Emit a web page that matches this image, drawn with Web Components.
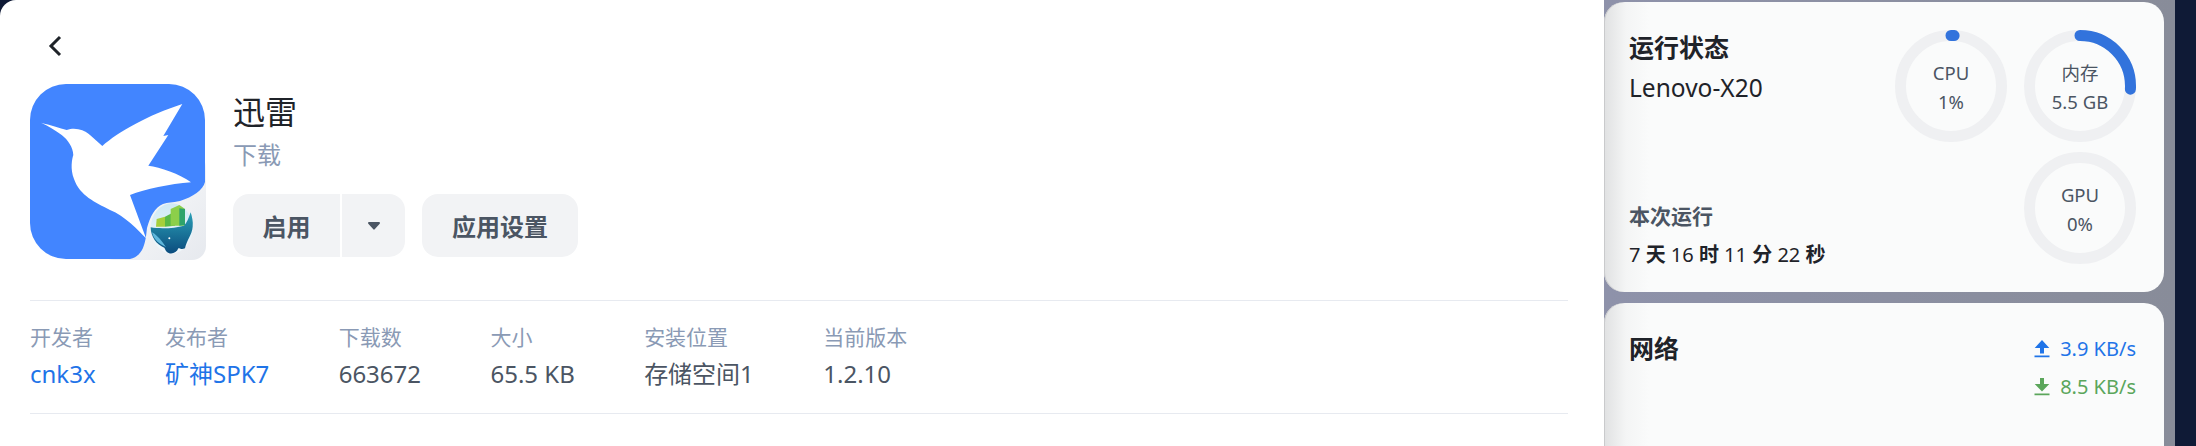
<!DOCTYPE html>
<html lang="zh-CN">
<head>
<meta charset="utf-8">
<title>迅雷</title>
<style>
  html, body { margin: 0; height: 446px; overflow: hidden; background: #0f1a36; }
  body { font-family: "Noto Sans", "Noto Sans CJK SC", sans-serif; }
  app-shell { height: 446px; }
</style>
</head>
<body>
<app-shell>
  <app-detail slot="main"></app-detail>
  <status-card slot="side"></status-card>
  <network-card slot="side"></network-card>
</app-shell>

<script>
class AppShell extends HTMLElement {
  constructor() {
    super();
    this.attachShadow({ mode: 'open' });
  }

  connectedCallback() {
    this.shadowRoot.innerHTML = `
    <style>
      :host { display: flex; width: 2196px; }
      .main { width: 1604px; flex: none; background: #fff; border-top-left-radius: 16px; overflow: hidden; }
      .rail {
        width: 571px; flex: none; box-sizing: border-box; height: 446px; overflow: hidden;
        padding: 2px 11px 0 0; display: flex; flex-direction: column; gap: 11px;
        background: linear-gradient(90deg, #8e92aa, #888c99);
      }
    </style>
    <div class="main"><slot name="main"></slot></div>
    <div class="rail"><slot name="side"></slot></div>
    `;
  }
}

class AppIcon extends HTMLElement {
  constructor() {
    super();
    this.attachShadow({ mode: 'open' });
  }

  connectedCallback() {
    this.shadowRoot.innerHTML = `
    <style>
      :host { display: block; width: 176px; height: 176px; flex: none; }
      svg { display: block; }
    </style>
    <svg width="176" height="176" viewBox="0 0 176 176">
      <defs>
        <linearGradient id="c" x1="0" y1="0" x2="1" y2="1"><stop offset="0" stop-color="#fff"/><stop offset="1" stop-color="#e6e9ee"/></linearGradient>
        <linearGradient id="w" x1="0" y1="0" x2="0" y2="1"><stop offset="0" stop-color="#2a9fb6"/><stop offset="1" stop-color="#0b4c7e"/></linearGradient>
        <linearGradient id="b" x1="0" y1="0" x2="0" y2="1"><stop offset="0" stop-color="#cfe9f5"/><stop offset="1" stop-color="#f2f8fb"/></linearGradient>
      </defs>
      <rect x="70" y="70" width="106" height="106" rx="14" fill="url(#c)"/>
      <path d="M36 0H139A36 36 0 0 1 175 36V98C173 106 163 113 150 117C142 119 138 118 133 120C125 123 120 133 117 144C116 152 116 156 113 164C110 170 106 174 100 175H36A36 36 0 0 1 0 139V36A36 36 0 0 1 36 0Z" fill="#4285ff"/>
      <path d="M11 38.7C20 41 30 44 36.7 46C41 44.5 45 44.5 48.3 45.3C54 46.5 58 49 60 51L72.3 62C88 48 118 31 152.3 20L133.3 52L138.3 51L118.3 81.7C130 83 150 90 161 98.3C140 100 115 105 100 111L116 154.3C108 146 95 132 80 126C65 118 50 112 44 95C40 85 42 75 43.3 71C43 63 38 56 31.7 51C25 46 18 42 11 38.7Z" fill="#fff"/>
      <g transform="translate(100 101) scale(.3333)">
        <ellipse cx="125" cy="130" rx="63" ry="75" fill="url(#b)"/>
        <path d="M80 102 105 95V125H78Z" fill="#a6cf3c"/>
        <path d="M105 95 125 85 135 90V122L105 125Z" fill="#58b947"/>
        <path d="M122 72 148 60 165 72V122H122Z" fill="#8ccf4a"/>
        <path d="M148 70 165 72V120L148 122Z" fill="#2fa36b"/>
        <path d="M62 127C90 132 135 130 162 122C170 115 176 100 182 82C186 95 190 110 188 125C186 150 170 165 165 190C155 195 150 190 145 190C140 205 120 210 110 200C105 195 105 190 103 188C80 180 62 155 62 127Z" fill="url(#w)"/>
        <path d="M66 142C72 165 88 178 108 186C96 170 84 152 66 142Z" fill="#5fb7dc"/>
        <circle cx="118" cy="160" r="3" fill="#fff"/>
      </g>
    </svg>
    `;
  }
}

class AppDetail extends HTMLElement {
  constructor() {
    super();
    this.attachShadow({ mode: 'open' });
  }

  connectedCallback() {
    this.shadowRoot.innerHTML = `
    <style>
      :host { display: block; padding: 35px 36px 0 30px; height: 411px; }
      .back { display: block; margin-left: 18px; width: 14px; height: 22px; }
      .head { display: flex; gap: 27px; margin-top: 27px; }
      h1 { margin: 9px 0 0; font-size: 32px; line-height: 38px; font-weight: 400; color: #1f2329; }
      .cat { margin-top: 8px; font-size: 24px; line-height: 32px; color: #8a9ab5; }
      .actions { display: flex; gap: 17px; margin-top: 23px; }
      .split { display: flex; gap: 2px; }
      .btn {
        height: 63px; display: flex; align-items: center; justify-content: center;
        background: #f2f3f5; color: #4b5563; font-size: 24px; font-weight: 700;
      }
      .on { width: 107px; border-radius: 16px 0 0 16px; }
      .more { width: 63px; border-radius: 0 16px 16px 0; }
      .set { width: 156px; border-radius: 16px; }
      .facts {
        margin-top: 40px; box-sizing: border-box; height: 114px; padding-top: 20px;
        border-top: 1px solid #e7eaf0; border-bottom: 1px solid #e7eaf0;
        display: flex; gap: 69.4px;
      }
      .fact span { display: block; font-size: 21px; line-height: 32px; color: #8a9ab5; }
      .fact b { display: block; margin-top: 4px; font-size: 24px; line-height: 34px; font-weight: 400; color: #4b5563; white-space: nowrap; }
      .fact b.link { color: #1f74e8; }
    </style>
    <svg class="back" viewBox="0 0 14 22" fill="none" stroke="#1f2329" stroke-width="3"><path d="M12 2 3 11l9 9"/></svg>
    <div class="head">
      <app-icon></app-icon>
      <div class="info">
        <h1>迅雷</h1>
        <div class="cat">下载</div>
        <div class="actions">
          <div class="split">
            <div class="btn on">启用</div>
            <div class="btn more"><svg width="12" height="8" viewBox="0 0 12 8"><path d="M1 0H11A1 1 0 0 1 11.7 1.7L6.7 7.3A1 1 0 0 1 5.3 7.3L.3 1.7A1 1 0 0 1 1 0Z" fill="#4b5563"/></svg></div>
          </div>
          <div class="btn set">应用设置</div>
        </div>
      </div>
    </div>
    <div class="facts">
      <div class="fact"><span>开发者</span><b class="link">cnk3x</b></div>
      <div class="fact"><span>发布者</span><b class="link">矿神SPK7</b></div>
      <div class="fact"><span>下载数</span><b>663672</b></div>
      <div class="fact"><span>大小</span><b>65.5 KB</b></div>
      <div class="fact"><span>安装位置</span><b>存储空间1</b></div>
      <div class="fact"><span>当前版本</span><b>1.2.10</b></div>
    </div>
    `;
  }
}

class UsageRing extends HTMLElement {
  constructor() {
    super();
    this.attachShadow({ mode: 'open' });
  }

  connectedCallback() {
    const pct = Number(this.getAttribute('pct') || 0);
    const r = 50.5;
    const len = 2 * Math.PI * r;
    const arc = pct > 0
      ? `<circle cx="56" cy="56" r="${r}" fill="none" stroke="#3273dc" stroke-width="11" stroke-linecap="round"
           stroke-dasharray="${len * pct / 100} ${len}" transform="rotate(-90 56 56)"/>`
      : '';
    this.shadowRoot.innerHTML = `
    <style>
      :host { display: block; position: relative; width: 112px; height: 112px; }
      svg { display: block; }
      .txt {
        position: absolute; inset: 0; padding-top: 1px; box-sizing: border-box;
        display: flex; flex-direction: column; align-items: center; justify-content: center;
        gap: 8px; font-size: 18.5px; line-height: 21px; color: #4b5563;
      }
    </style>
    <svg width="112" height="112" viewBox="0 0 112 112">
      <circle cx="56" cy="56" r="${r}" fill="none" stroke="#eff0f2" stroke-width="11"/>
      ${arc}
    </svg>
    <div class="txt"><span>${this.getAttribute('label')}</span><span>${this.getAttribute('value')}</span></div>
    `;
  }
}

const CARD_STYLE = `
  :host {
    display: block; box-sizing: border-box; flex: none;
    border-radius: 20px; color: #1f2329;
    background: linear-gradient(90deg, #e0e1e2, #f4f5f5 22px, #fafbfb 45px);
    box-shadow: inset 1px 0 #c9cacc;
  }
  h2 { margin: 0; font-size: 25px; line-height: 34px; font-weight: 700; color: #1f2329; }
`;

class StatusCard extends HTMLElement {
  constructor() {
    super();
    this.attachShadow({ mode: 'open' });
  }

  connectedCallback() {
    this.shadowRoot.innerHTML = `
    <style>
      ${CARD_STYLE}
      :host { height: 290px; padding: 28px 28px 0 25px; display: flex; justify-content: space-between; }
      .left { display: flex; flex-direction: column; }
      .host { margin-top: 7px; font-size: 24.5px; line-height: 34px; }
      .run { margin-top: auto; margin-bottom: 22px; }
      .run h3 { margin: 0; font-size: 21px; line-height: 30px; font-weight: 700; color: #4b5563; }
      .up { margin-top: 9px; font-size: 20px; line-height: 30px; white-space: nowrap; }
      .up b { font-weight: 700; }
      .rings { display: grid; grid-template-columns: 112px 112px; gap: 10px 17px; align-content: start; }
      .gpu { grid-column: 2; }
    </style>
    <div class="left">
      <h2>运行状态</h2>
      <div class="host">Lenovo-X20</div>
      <div class="run">
        <h3>本次运行</h3>
        <div class="up">7 <b>天</b> 16 <b>时</b> 11 <b>分</b> 22 <b>秒</b></div>
      </div>
    </div>
    <div class="rings">
      <usage-ring pct="1" label="CPU" value="1%"></usage-ring>
      <usage-ring pct="26" label="内存" value="5.5 GB"></usage-ring>
      <usage-ring class="gpu" pct="0" label="GPU" value="0%"></usage-ring>
    </div>
    `;
  }
}

class NetworkCard extends HTMLElement {
  constructor() {
    super();
    this.attachShadow({ mode: 'open' });
  }

  connectedCallback() {
    this.shadowRoot.innerHTML = `
    <style>
      ${CARD_STYLE}
      :host { height: 200px; padding: 28px 28px 0 25px; display: flex; justify-content: space-between; }
      .rates { display: flex; flex-direction: column; gap: 8px; margin-top: 3px; }
      .rate { display: flex; align-items: center; gap: 10px; font-size: 20px; line-height: 30px; }
      .tx { color: #1f74e8; }
      .rx { color: #5ba65b; }
      svg { display: block; }
    </style>
    <h2>网络</h2>
    <div class="rates">
      <div class="rate tx"><svg width="16" height="18" viewBox="0 0 16 18"><path d="M8 0 15.3 8H10V13.5H6V8H.7ZM.5 15.6H15.5V17.2H.5Z" fill="currentColor"/></svg>3.9 KB/s</div>
      <div class="rate rx"><svg width="16" height="18" viewBox="0 0 16 18"><path d="M6 0H10V6H15.3L8 13.5.7 6H6ZM.5 15.6H15.5V17.2H.5Z" fill="currentColor"/></svg>8.5 KB/s</div>
    </div>
    `;
  }
}

customElements.define('app-shell', AppShell);
customElements.define('app-icon', AppIcon);
customElements.define('app-detail', AppDetail);
customElements.define('usage-ring', UsageRing);
customElements.define('status-card', StatusCard);
customElements.define('network-card', NetworkCard);
</script>
</body>
</html>
